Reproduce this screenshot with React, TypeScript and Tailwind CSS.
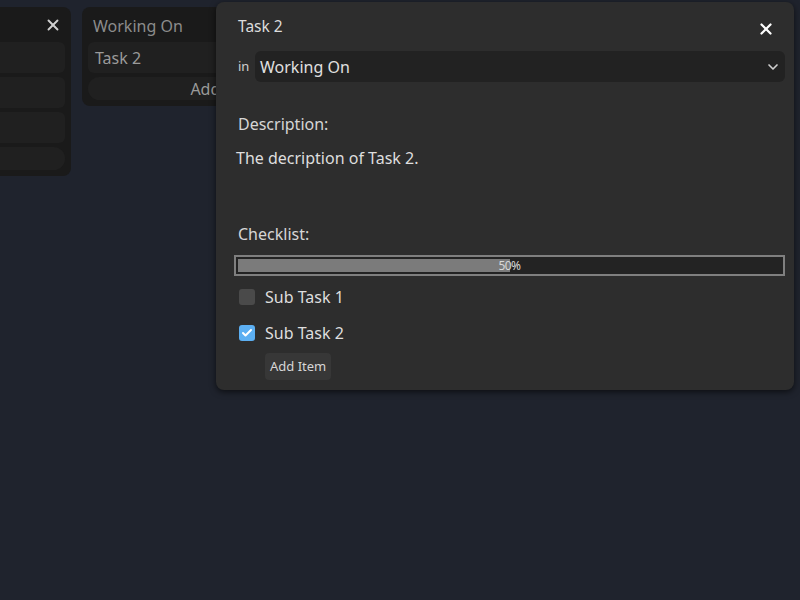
import React from 'react';
import { X, ChevronDown, Check } from 'lucide-react';

const font = { fontFamily: '"Noto Sans", "Open Sans", sans-serif' };

export default function App() {
  return (
    <div className="relative w-[800px] h-[600px] overflow-hidden bg-[#1f232d]" style={font}>
      <div className="flex gap-[11px] pt-[7px] items-start">
        <div className="shrink-0 w-[200px] -ml-[129px] bg-[#1a1a1a] rounded-lg p-[6px] pt-0 flex flex-col gap-[4px] pb-[6px]">
          <div className="h-[31px] flex items-center justify-end pr-[3px] pt-[4px]">
            <X className="w-[18px] h-[18px] text-[#cfcfcf]" strokeWidth={2.5} />
          </div>
          <div className="h-[31px] bg-[#202020] rounded-md" />
          <div className="h-[31px] bg-[#202020] rounded-md" />
          <div className="h-[31px] bg-[#202020] rounded-md" />
          <div className="h-[23px] bg-[#202020] rounded-xl" />
        </div>
        <div className="shrink-0 w-[286px] bg-[#1a1a1a] rounded-lg px-[6px] pb-[6px] flex flex-col gap-[4px]">
          <div className="h-[31px] flex items-center pt-[6px] px-[5px] text-[16px] text-[#8c8c8c]">Working On</div>
          <div className="h-[31px] bg-[#202020] rounded-md px-[7px] flex items-center text-[16px] text-[#9a9a9a]">Task 2</div>
          <div className="h-[23px] bg-[#202020] rounded-xl flex items-center justify-center text-[16px] text-[#9a9a9a]">Add Item</div>
        </div>
      </div>

      <div className="absolute left-[216px] top-[2px] w-[578px] h-[388px] bg-[#2d2d2d] rounded-lg shadow-[0_2px_6px_rgba(0,0,0,0.6)] pl-[18px] pr-[9px] pt-[14px] flex flex-col">
        <div className="flex items-center justify-between h-[22px] pl-[4px] pr-[10px]">
          <span className="text-[15.5px] text-[#dcdcdc]">Task 2</span>
          <X className="w-[18px] h-[18px] text-white mt-[3px]" strokeWidth={3} />
        </div>
        <div className="flex items-center mt-[13px] h-[31px]">
          <span className="text-[13px] text-[#d0d0d0] pl-[4px] w-[21px]">in</span>
          <div className="flex-1 h-[31px] bg-[#222222] rounded-md flex items-center justify-between pl-[5px] pr-[4px]">
            <span className="text-[16px] text-[#e0e0e0]">Working On</span>
            <ChevronDown className="w-[16px] h-[16px] text-[#cfcfcf]" strokeWidth={2.5} />
          </div>
        </div>
        <div className="mt-[30px] h-[24px] flex items-center pl-[4px] text-[16px] text-[#d6d6d6]">Description:</div>
        <div className="mt-[10px] h-[24px] flex items-center pl-[2px] text-[16px] text-[#dedede]">The decription of Task 2.</div>
        <div className="mt-[52px] h-[24px] flex items-center pl-[4px] text-[16px] text-[#d6d6d6]">Checklist:</div>
        <div className="mt-[9px] h-[21px] border-2 border-[#7f7f7f] bg-[#232323] p-[2px] relative">
          <div className="h-full w-1/2 bg-[#7b7b7b]" />
          <span className="absolute inset-0 flex items-center justify-center text-[12px] text-[#d8d8d8] tracking-[-0.5px]">50%</span>
        </div>
        <div className="mt-[13px] h-[16px] flex items-center gap-[10px] pl-[5px]">
          <div className="w-[16px] h-[16px] rounded-[3px] bg-[#4a4a4a]" />
          <span className="text-[16px] text-[#dedede]">Sub Task 1</span>
        </div>
        <div className="mt-[20px] h-[16px] flex items-center gap-[10px] pl-[5px]">
          <div className="w-[16px] h-[16px] rounded-[3px] bg-[#5caff2] flex items-center justify-center">
            <Check className="w-[12px] h-[12px] text-white" strokeWidth={4} />
          </div>
          <span className="text-[16px] text-[#dedede]">Sub Task 2</span>
        </div>
        <div className="mt-[12px] pl-[31px]">
          <button className="h-[27px] px-[5px] rounded bg-[#373737] text-[13px] text-[#d6d6d6]">Add Item</button>
        </div>
      </div>
    </div>
  );
}
